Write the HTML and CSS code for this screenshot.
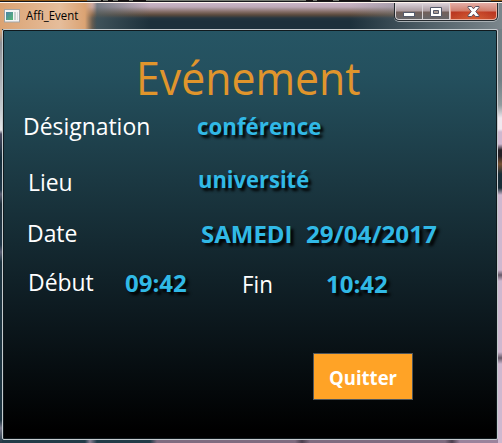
FILE: index.html
```html
<!DOCTYPE html>
<html lang="fr">
<head>
<meta charset="utf-8">
<title>Affi_Event</title>
<link rel="stylesheet" href="styles.css">
</head>
<body>
<div class="window">
  <header class="titlebar">
    <svg class="app-icon" width="16" height="14" viewBox="0 0 16 14">
      <defs><linearGradient id="pane" x2="1" y2="1"><stop stop-color="#4b83a8"/><stop offset="1" stop-color="#53b773"/></linearGradient></defs>
      <rect x=".5" y=".5" width="15" height="12.5" fill="#f4f5f5" stroke="#a3a5a6"/>
      <path d="M2 3h7v8H2z" fill="url(#pane)"/><path d="M10 3h2v8h-2z" fill="#c6d3d0"/><path d="M13 3h1v8h-1z" fill="#d9dddd"/>
    </svg>
    <span class="caption"><span class="fit">Affi_Event</span></span>
    <div class="controls">
      <span class="control minimize"><svg width="12" height="5"><rect x=".5" y=".5" width="11" height="4" fill="#fff" stroke="#555a6b"/></svg></span>
      <span class="control maximize"><svg width="12" height="10"><path d="M.5.5h11v9H.5z" fill="#fff" stroke="#555a6b"/><path d="M3.5 3.5h5v3h-5z" fill="#a99a94" stroke="#555a6b"/></svg></span>
      <span class="control close"><svg width="13" height="11" viewBox="0 0 13 11"><path d="M1 .5h3.500l2 2.300 2-2.300H12v1L8.800 5.500 12 9.500v1H8.500l-2-2.300-2 2.300H1v-1l3.200-4L1 1.500z" fill="#fff" stroke="#5a5060"/></svg></span>
    </div>
  </header>
  <main class="client">
    <h1 class="title"><span class="fit">Evénement</span></h1>
    <div class="row designation"><span class="label"><span class="fit">Désignation</span></span><span class="value"><span class="fit">conférence</span></span></div>
    <div class="row lieu"><span class="label"><span class="fit">Lieu</span></span><span class="value"><span class="fit">université</span></span></div>
    <div class="row date"><span class="label"><span class="fit">Date</span></span><span class="value day"><span class="fit">SAMEDI</span></span><span class="value number"><span class="fit">29/04/2017</span></span></div>
    <div class="row hours"><span class="label start"><span class="fit">Début</span></span><span class="value start-time"><span class="fit">09:42</span></span><span class="label end"><span class="fit">Fin</span></span><span class="value end-time"><span class="fit">10:42</span></span></div>
    <button class="quit"><span class="fit">Quitter</span></button>
  </main>
</div>
</body>
</html>
```
FILE: styles.css
```css
* { box-sizing: border-box; }
body { margin: 0; width: 502px; height: 443px; overflow: hidden; font-family: "Open Sans", "Noto Sans", sans-serif; }
.window {
  width: 502px; height: 443px; padding: 3px 4px 3px 2px;
  background:
    linear-gradient(90deg, #171313 0 2px, #777b72 2px 7px, #171313 7px 12px, #777b72 12px 17px, #171313 17px 28px, #777b72 28px 32px, #171313 32px 45px, #777b72 45px 205px, #171313 205px 212px, #777b72 212px 216px, #171313 216px 232px, #777b72 232px 238px, #171313 238px 270px, #777b72 270px) 101px 0 / 390px 1px no-repeat,
    linear-gradient(90deg, #935b18 0 87px, #777b72 87px 491px, #935b18 491px) 0 0 / 502px 1px no-repeat,
    linear-gradient(#17171b, #17171b) 0 1px / 502px 1px no-repeat,
    linear-gradient(#fff5ed, #fff5ed) 0 2px / 502px 1px no-repeat,
    linear-gradient(#dba373 0 30px, #8c8f95 43px, #c5cbd0 110px, #e5e6e8 130px, #4a4a60 134px, #142d3a 158px, #203748 190px, #5c6075 194px, #20313c 204px, #203748 245px, #5c6075 252px, #1d3440 262px, #1d3440 420px, #77798a 428px, #243945) 0 0 / 2px 443px no-repeat,
    linear-gradient(#727f85 0 80px, #919b9e 105px, #f0e8ef 118px 129px, #cfb8d0 132px 144px, #252026 150px 156px, #765032 164px, #192e38 174px 188px, #cfb8d0 195px 270px, #665868 275px, #cfb8d0 281px 352px, #665868 358px, #cfb8d0 364px) 498px 0 / 4px 443px no-repeat,
    linear-gradient(90deg, #223c48 0 85px, #877f93 90px, #223c48 97px 150px, #806c80 157px 295px, #4d404e 302px, #806c80 310px 445px, #4d404e 452px, #9b839c 460px);
}
.titlebar {
  display: flex; flex: none; width: 502px; height: 26px; margin-left: -2px; padding-left: 4px;
  background:
    linear-gradient(90deg, #dba373 0, #e5bd9b 60px, #dba373 85px, transparent 97px),
    linear-gradient(90deg, transparent 92px, #506369aa 97px, transparent 150px 350px, #75828899 430px, #7a858b 500px),
    linear-gradient(#cbb6c8 0, #bda8b6 4px, #806a62 9px, #59493c 12px, #263640 15px, #1c303b 18px);
}
.app-icon { flex: none; margin-top: 6px; }
.caption { flex: none; margin: 3px 0 0 6px; width: 56px; font-size: 12px; line-height: 20px; color: #000; white-space: nowrap; }
.caption .fit { transform: scaleX(.95); }
.fit { display: inline-block; white-space: nowrap; transform-origin: 0 50%; }
.controls {
  display: flex; margin-left: 312px; width: 104px; height: 18px; flex: none;
  border: 1px solid #24292e; border-top: 0; border-radius: 0 0 5px 5px;
  overflow: hidden; box-shadow: 0 1px 0 #a8b0b4, 1px 0 0 #a8b0b4;
}
.control {
  display: flex; align-items: center; justify-content: center; padding-top: 1px;
  border: 1px solid #d8d3d6; border-top: 0;
  background: linear-gradient(#ddd4dc, #aa9ba0 8px, #73605b 9px, #65676b 17px);
}
.minimize { width: 28px; padding-top: 6px; border-radius: 0 0 0 4px; }
.maximize { width: 27px; border-left: 0; }
.close { width: 47px; border-color: #edaa98; border-radius: 0 0 4px 0; background: radial-gradient(ellipse at 50% 100%, #e36e3b88, transparent 65%), linear-gradient(#e4ada6, #cf8071 8px, #bb3520 9px, #c24a2c 17px); }
.client {
  width: 496px; height: 411px; padding-left: 1px; border: 1px solid #c5cccf; border-radius: 2px;
  box-shadow: inset 0 0 0 1px #10191d;
  background: linear-gradient(#265564 0, #24505e 45px, #1b3842 150px, #0d1a20 280px, #000 400px);
}
.title { margin: 17px 0 0 132px; font-size: 46px; line-height: 60px; font-weight: 400; color: #e0952c; }
.title .fit { transform: scaleX(.93); }
.row { display: flex; height: 32px; font-size: 24px; line-height: 32px; }
.label { width: 174px; padding-left: 19px; flex: none; color: #fff; }
.label .fit { transform: scaleX(.955); }
.value { color: #31b9e6; font-weight: 700; flex: none; text-shadow: 3px 3px 3px #000; }
.designation { margin-top: 3px; }
.designation .value { padding-left: 19px; }
.designation .value .fit { transform: scaleX(.93); }
.lieu { margin-top: 24px; }
.lieu .label { padding-left: 24px; }
.lieu .value { padding-left: 20px; margin-top: -3px; }
.lieu .value .fit { transform: scaleX(.915); }
.date { margin-top: 19px; }
.date .label { padding-left: 23px; }
.day { width: 128px; padding-left: 23px; margin-top: 1px; }
.number { margin-top: 1px; transform: scaleX(1.01); transform-origin: 0; }
.hours { margin-top: 17px; }
.start { width: 121px; padding-left: 24px; }
.start-time { width: 117px; margin-top: 1px; }
.end { width: 84px; padding-left: 0; margin-top: 2px; }
.end-time { margin-top: 2px; }
.end .fit { transform: scaleX(.93); }
.quit {
  display: block; width: 100px; height: 47px; margin: 55px 0 0 309px; padding: 3px 0 0 15px;
  text-align: left; font: 700 19px/26px "Open Sans", sans-serif; color: #fff;
  background: #ffa326; border: 1px solid #50565a;
}
.quit .fit { transform: scaleX(.975); }
```
